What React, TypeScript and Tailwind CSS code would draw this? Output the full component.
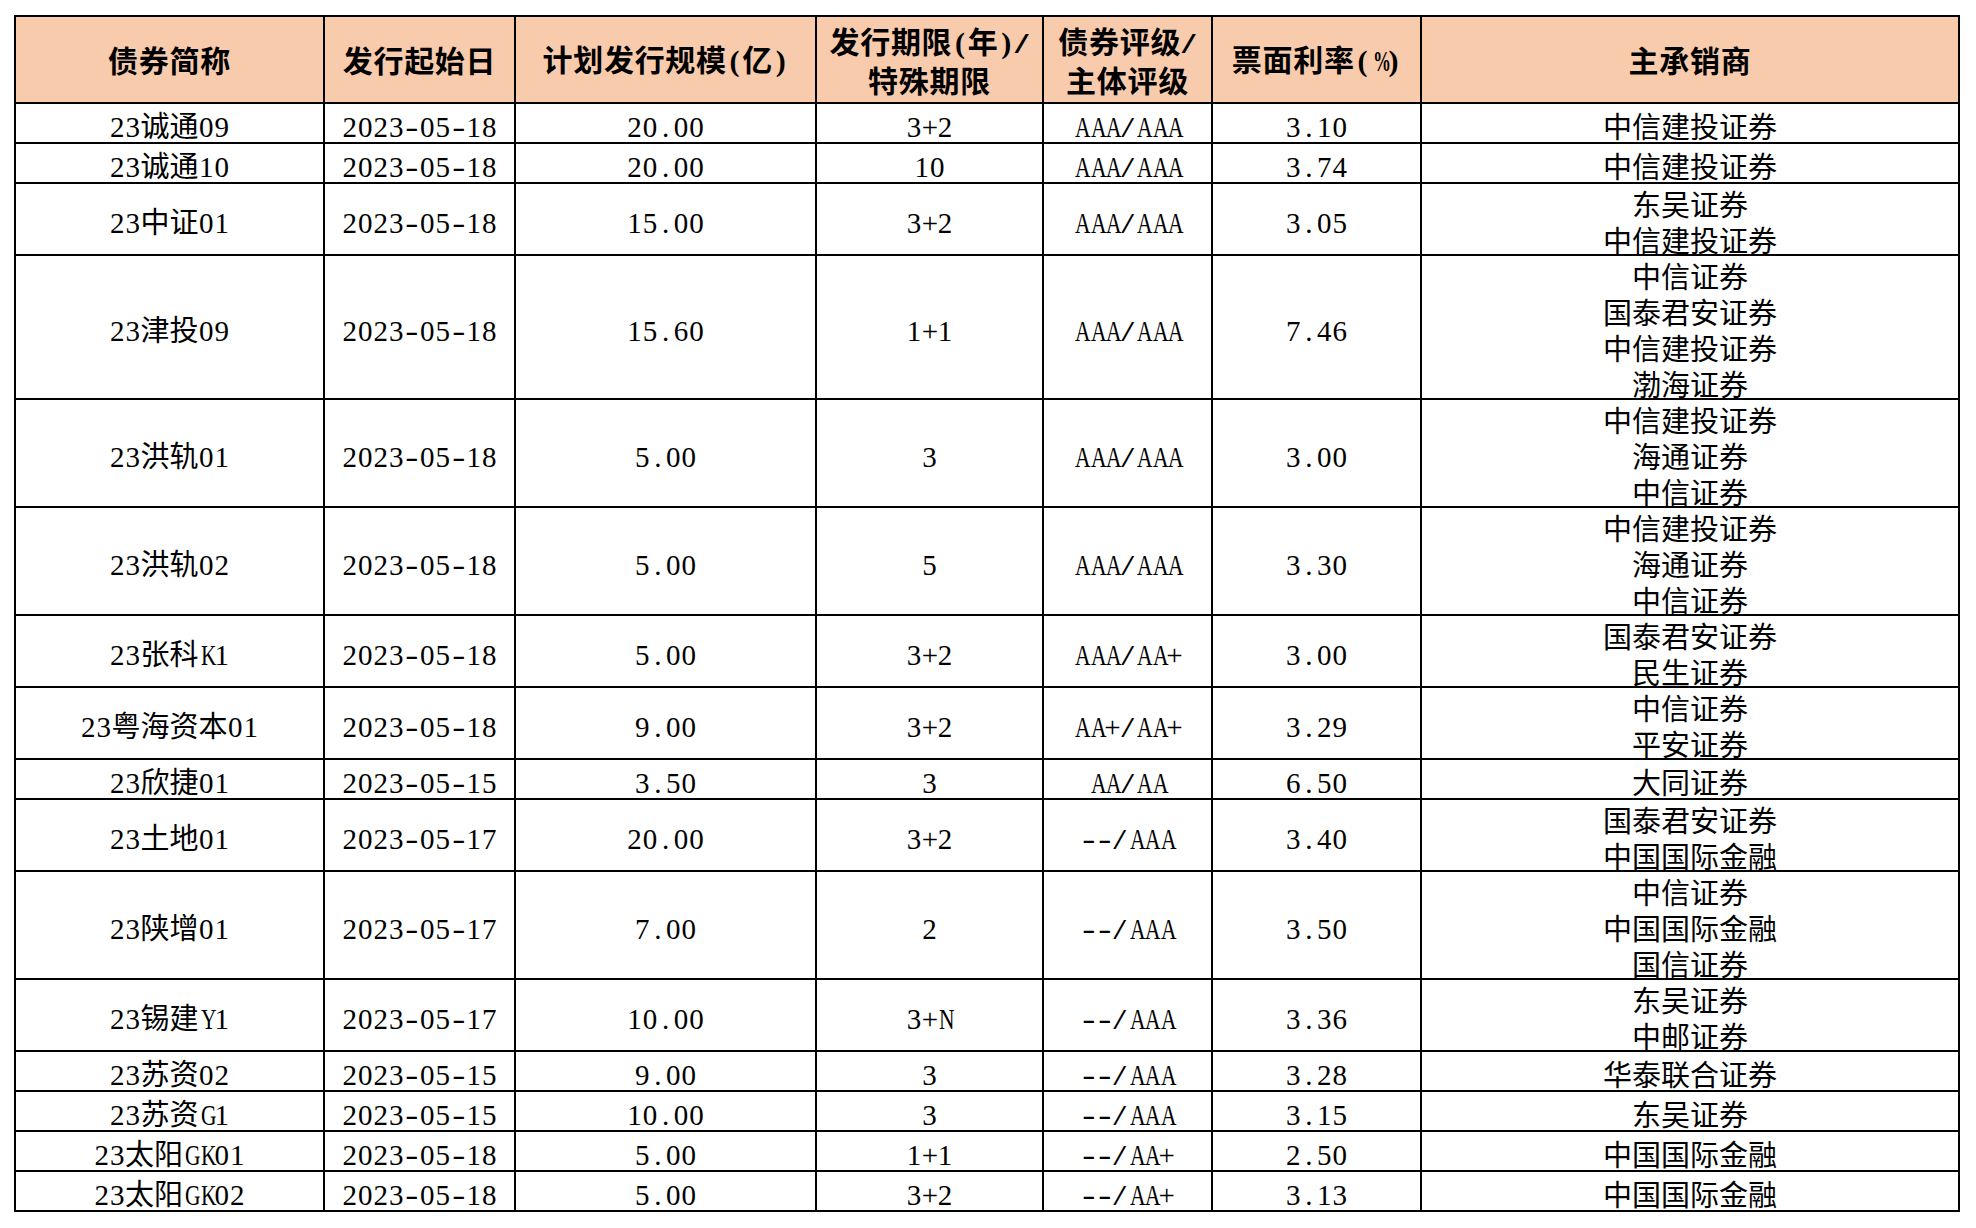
import React from "react";

type Row = {
  name: string;
  date: string;
  size: string;
  term: string;
  rating: string;
  rate: string;
  dealers: string[];
};

const rows: Row[] = [
  { name: "23诚通09", date: "2023-05-18", size: "20.00", term: "3+2", rating: "AAA/AAA", rate: "3.10", dealers: ["中信建投证券"] },
  { name: "23诚通10", date: "2023-05-18", size: "20.00", term: "10", rating: "AAA/AAA", rate: "3.74", dealers: ["中信建投证券"] },
  { name: "23中证01", date: "2023-05-18", size: "15.00", term: "3+2", rating: "AAA/AAA", rate: "3.05", dealers: ["东吴证券", "中信建投证券"] },
  { name: "23津投09", date: "2023-05-18", size: "15.60", term: "1+1", rating: "AAA/AAA", rate: "7.46", dealers: ["中信证券", "国泰君安证券", "中信建投证券", "渤海证券"] },
  { name: "23洪轨01", date: "2023-05-18", size: "5.00", term: "3", rating: "AAA/AAA", rate: "3.00", dealers: ["中信建投证券", "海通证券", "中信证券"] },
  { name: "23洪轨02", date: "2023-05-18", size: "5.00", term: "5", rating: "AAA/AAA", rate: "3.30", dealers: ["中信建投证券", "海通证券", "中信证券"] },
  { name: "23张科K1", date: "2023-05-18", size: "5.00", term: "3+2", rating: "AAA/AA+", rate: "3.00", dealers: ["国泰君安证券", "民生证券"] },
  { name: "23粤海资本01", date: "2023-05-18", size: "9.00", term: "3+2", rating: "AA+/AA+", rate: "3.29", dealers: ["中信证券", "平安证券"] },
  { name: "23欣捷01", date: "2023-05-15", size: "3.50", term: "3", rating: "AA/AA", rate: "6.50", dealers: ["大同证券"] },
  { name: "23土地01", date: "2023-05-17", size: "20.00", term: "3+2", rating: "--/AAA", rate: "3.40", dealers: ["国泰君安证券", "中国国际金融"] },
  { name: "23陕增01", date: "2023-05-17", size: "7.00", term: "2", rating: "--/AAA", rate: "3.50", dealers: ["中信证券", "中国国际金融", "国信证券"] },
  { name: "23锡建Y1", date: "2023-05-17", size: "10.00", term: "3+N", rating: "--/AAA", rate: "3.36", dealers: ["东吴证券", "中邮证券"] },
  { name: "23苏资02", date: "2023-05-15", size: "9.00", term: "3", rating: "--/AAA", rate: "3.28", dealers: ["华泰联合证券"] },
  { name: "23苏资G1", date: "2023-05-15", size: "10.00", term: "3", rating: "--/AAA", rate: "3.15", dealers: ["东吴证券"] },
  { name: "23太阳GK01", date: "2023-05-18", size: "5.00", term: "1+1", rating: "--/AA+", rate: "2.50", dealers: ["中国国际金融"] },
  { name: "23太阳GK02", date: "2023-05-18", size: "5.00", term: "3+2", rating: "--/AA+", rate: "3.13", dealers: ["中国国际金融"] },
];

const headers: string[][] = [
  ["债券简称"],
  ["发行起始日"],
  ["计划发行规模(亿)"],
  ["发行期限(年)/", "特殊期限"],
  ["债券评级/", "主体评级"],
  ["票面利率(%)"],
  ["主承销商"],
];

// row height (incl. bottom border) by number of text lines
const rowH: Record<number, string> = {
  1: "h-[40px]",
  2: "h-[72px]",
  3: "h-[108px]",
  4: "h-[144px]",
};

const isCjk = (ch: string) => /[\u3400-\u9fff]/.test(ch);

// half-width glyphs sit in fixed cells, like the sheet's font does
function latinClass(ch: string) {
  if (/[A-Z]/.test(ch)) return "inline-block w-[15.5px] text-center scale-x-[0.74]";
  if (ch === "-") return "inline-block w-[15.5px] text-center scale-x-[1.35]";
  if (ch === "/") return "inline-block w-[15.5px] text-center scale-x-[1.6]";
  if (ch === "%") return "inline-block w-[15.5px] text-center scale-x-[0.6]";
  return "inline-block w-[15.5px] text-center";
}

function Line({ text, head }: { text: string; head?: boolean }) {
  const parts: React.ReactNode[] = [];
  let buf = "";
  let k = 0;
  const flush = () => {
    if (buf) {
      parts.push(
        <span key={k++} className={head ? "tracking-[0.7px]" : ""}>
          {buf}
        </span>
      );
      buf = "";
    }
  };
  for (const ch of text) {
    if (isCjk(ch)) {
      buf += ch;
    } else {
      flush();
      parts.push(
        <span key={k++} className={`${latinClass(ch)} font-['Liberation_Serif',serif]`}>
          {ch}
        </span>
      );
    }
  }
  flush();
  return <div className="whitespace-nowrap">{parts}</div>;
}

function Cell({ lines, h }: { lines: string[]; h: string }) {
  return (
    <div
      className={`${h} border-r-2 border-b-2 border-black flex flex-col items-center justify-center pt-[4px] text-[29px] leading-[36px]`}
    >
      {lines.map((t, i) => (
        <Line key={i} text={t} />
      ))}
    </div>
  );
}

export default function App() {
  return (
    <div className="w-[1976px] h-[1228px] bg-white text-black font-['Noto_Sans_CJK_SC',sans-serif]">
      <div className="pt-[15px] pl-[14px]">
        <div className="w-[1946px] grid grid-cols-[309px_191px_301px_227px_169px_209px_538px] border-l-2 border-t-2 border-black">
          {headers.map((lines, i) => (
            <div
              key={i}
              className="h-[87px] bg-[#f8cbad] border-r-2 border-b-2 border-black flex flex-col items-center justify-center text-[30px] leading-[37px] font-bold"
            >
              {lines.map((t, j) => (
                <Line key={j} text={t} head />
              ))}
            </div>
          ))}
          {rows.map((r, i) => {
            const h = rowH[r.dealers.length];
            return (
              <React.Fragment key={i}>
                <Cell lines={[r.name]} h={h} />
                <Cell lines={[r.date]} h={h} />
                <Cell lines={[r.size]} h={h} />
                <Cell lines={[r.term]} h={h} />
                <Cell lines={[r.rating]} h={h} />
                <Cell lines={[r.rate]} h={h} />
                <Cell lines={r.dealers} h={h} />
              </React.Fragment>
            );
          })}
        </div>
      </div>
    </div>
  );
}
